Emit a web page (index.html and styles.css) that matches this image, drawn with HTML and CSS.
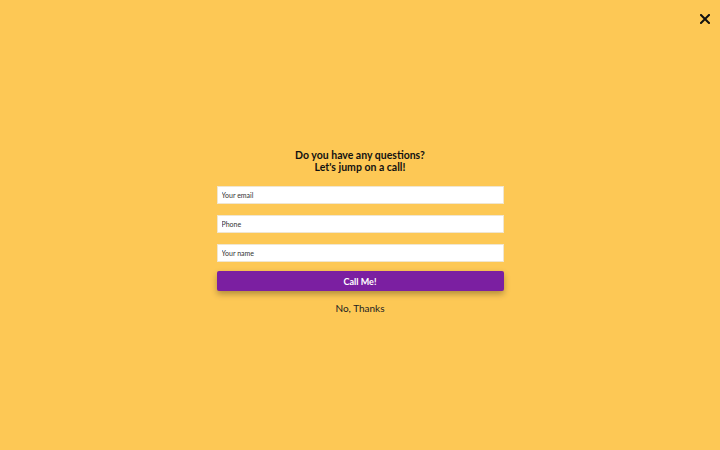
FILE: index.html
```html
<!DOCTYPE html>
<html lang="en">

<head>
  <meta charset="UTF-8">
  <meta name="viewport" content="width=device-width, initial-scale=1.0">
  <title>Call Me</title>
  <link rel="stylesheet" href="styles.css">
</head>

<body>
  <button class="close-button" aria-label="Close">
    <svg width="10" height="10" viewBox="0 0 10 10">
      <path d="M1 1 L9 9 M9 1 L1 9" stroke="#111" stroke-width="2" stroke-linecap="square" />
    </svg>
  </button>

  <div class="container">
    <div class="popup">
      <div class="title">Do you have any questions?<br>Let's jump on a call!</div>
      <form class="call-form" onsubmit="return false;">
        <input class="field" type="email" placeholder="Your email">
        <input class="field" type="tel" placeholder="Phone">
        <input class="field" type="text" placeholder="Your name">
        <button class="call-button" type="submit">Call Me!</button>
      </form>
      <button class="thanks-button">No, Thanks</button>
    </div>
  </div>
</body>

</html>
```

FILE: styles.css
```css
body {
  background-color: #fdc855;
  font-family: Lato, "Open Sans", sans-serif;
  margin: 0;
  padding: 0;
}

.close-button {
  position: absolute;
  top: 11px;
  right: 9px;
  width: 12px;
  height: 12px;
  padding: 1px;
  border: none;
  background: none;
  cursor: pointer;
}

.container {
  display: flex;
  justify-content: center;
  height: 450px;
}

.popup {
  width: 287px;
  margin-top: 150px;
  display: flex;
  flex-direction: column;
  align-items: center;
}

.title {
  font-size: 10.5px;
  font-weight: bold;
  line-height: 11.5px;
  color: #111;
  text-align: center;
}

.call-form {
  width: 100%;
  display: flex;
  flex-direction: column;
  gap: 11px;
  margin-top: 13px;
}

.field {
  box-sizing: border-box;
  width: 100%;
  height: 18px;
  border: 1px solid #f0e6d0;
  background: #fff;
  padding: 0 4px;
  font-family: inherit;
  font-size: 7px;
  color: #333;
}

.field::placeholder {
  color: #333;
}

.call-button {
  height: 20px;
  margin-top: -2px;
  border: none;
  border-radius: 2px;
  background-color: #7b1fa1;
  color: #fff;
  font-family: inherit;
  font-size: 9px;
  font-weight: bold;
  box-shadow: 0 3px 6px rgba(0, 0, 0, 0.3);
  cursor: pointer;
}

.thanks-button {
  margin-top: 10px;
  border: none;
  background: none;
  font-family: inherit;
  font-size: 10px;
  color: #222;
  cursor: pointer;
}
```
